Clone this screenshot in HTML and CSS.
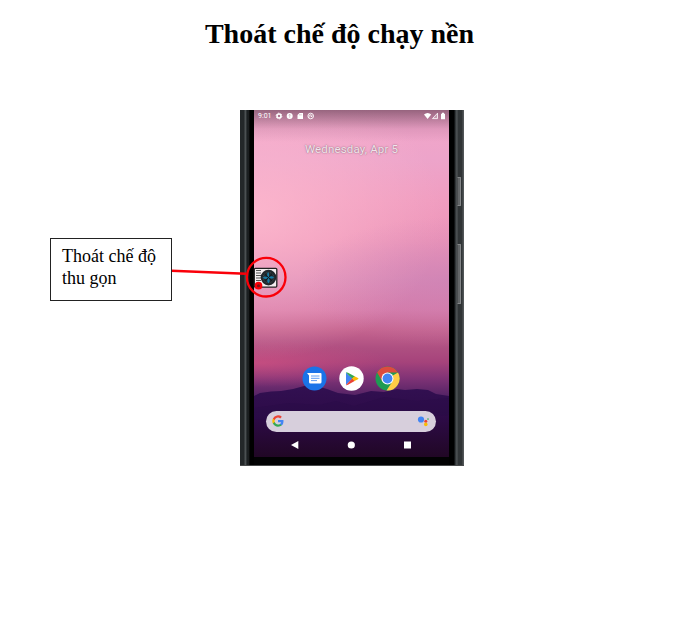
FILE: index.html
```html
<!DOCTYPE html>
<html lang="vi">
<head>
<meta charset="utf-8">
<title>Thoát chế độ chạy nền</title>
<link rel="stylesheet" href="styles.css">
</head>
<body>
<h1 class="title">Thoát chế độ chạy nền</h1>
<main class="figure">
  <div class="phone">
    <div class="frame frame-left"></div>
    <div class="screen">
      <svg class="scenery" viewBox="0 0 195 347" aria-hidden="true">
        <defs>
          <linearGradient id="hill" x1="0" y1="0" x2="0" y2="1"><stop offset="0" stop-color="#321052"/><stop offset=".45" stop-color="#2d0b47"/><stop offset="1" stop-color="#210725"/></linearGradient>
        </defs>
        <path fill="url(#hill)" d="M0 286L6 283L17 281.500L27 281L39 279L52 275.500L63 276L73 279L84 283L101 285L117 281L130 282L143 279L151 280L163 279L174 280L182 284L195 286V347H0Z"/>
        <path fill="#240b42" opacity=".25" d="M0 298L35 293L65 295L82 291L100 296L130 287L163 291L195 288V305L0 310Z"/>
      </svg>
      <div class="status">
        <span class="time">9:01</span>
        <svg width="40" height="8" viewBox="0 0 40 8" aria-hidden="true">
          <circle cx="4" cy="4" r="2" fill="none" stroke="#fff" stroke-width="1.500"/>
          <circle cx="4" cy="4" r="2.900" fill="none" stroke="#fff" stroke-width=".8" stroke-dasharray="1.500 1.537"/>
          <circle cx="14.700" cy="4" r="3" fill="#fff"/><path d="M14.700 2.300V5.800M13.700 3.500L14.700 2.300L15.700 3.500" stroke="#bd91a6" stroke-width=".5" fill="none"/>
          <path d="M24.500 1H28V7H22.500V3Z" fill="#fff"/><path d="M24.700 2.200V3.400M26 2.200V3.400" stroke="#ad8295" stroke-width=".5"/>
          <circle cx="35.700" cy="4" r="2.800" fill="none" stroke="#fff" stroke-width=".9"/><path d="M34 5.800V3.500Q36 1.700 37.300 3.700Q37 5 35.500 4.700M35.500 3.500L37 5" stroke="#fff" stroke-width=".8" fill="none"/>
        </svg>
        <svg class="signals" width="22" height="8" viewBox="0 0 22 8" aria-hidden="true">
          <path fill="#fff" d="M0 2.500Q3.600-.5 7.200 2.500L3.600 7Z"/>
          <path d="M8.500 6.600L13.500 1.200V6.600Z" fill="#fff" fill-opacity=".25" stroke="#fff" stroke-width=".8"/>
          <path fill="#fff" d="M17 1.700H18V.8H20V1.700H21V7.200H17Z"/>
        </svg>
      </div>
      <div class="date">Wednesday, Apr 5</div>
      <div class="dock">
        <svg width="25" height="25" viewBox="0 0 25 25" aria-hidden="true">
          <circle cx="12.500" cy="12.500" r="12" fill="#1a73e8"/>
          <path fill="#fff" d="M5 7H18.500Q19.500 7 19.500 8V16Q19.500 17.500 18 17.500H8.500Q7 17.500 7 16V9.500Z"/>
          <path d="M9 10H17.500M9 12.300H17.500M9 14.600H15" stroke="#5e9cf4" stroke-width="1"/>
        </svg>
        <svg width="25" height="25" viewBox="0 0 25 25" aria-hidden="true">
          <circle cx="12.500" cy="12.500" r="12.200" fill="#fff"/>
          <path fill="#4285f4" d="M7 6.500V19L13.500 12.500Z"/>
          <path fill="#34a853" d="M7 6.500Q7.500 5.800 9 6.700L16 10.500L13.300 12.800Z"/>
          <path fill="#ea4335" d="M7 19L13.300 12.200L16 14.700L9 18.700Q7.500 19.500 7 19Z"/>
          <path fill="#fbbc04" d="M15.500 10.200L19 12Q20 12.600 19 13.200L15.500 15L13 12.600Z"/>
        </svg>
        <svg width="25" height="25" viewBox="0 0 25 25" aria-hidden="true">
          <circle cx="12.500" cy="12.500" r="12" fill="#1e9b53"/>
          <path fill="#ffcd46" d="M12.500 12.500L23 6.600A12 12 0 0 1 11.500 24.450L17.600 15.200Z"/>
          <path fill="#dc4b3e" d="M2.100 6.500A12 12 0 0 1 22.900 6.500H12.500L7.300 15.500Z"/>
          <circle cx="12.500" cy="12.500" r="6" fill="#fff"/>
          <circle cx="12.500" cy="12.500" r="4.900" fill="#4285f4"/>
        </svg>
      </div>
      <div class="search">
        <svg width="12" height="12" viewBox="0 0 24 24" aria-hidden="true">
          <path fill="#4285f4" d="M23 12.250c0-.8-.07-1.500-.2-2.250H12v4.300h6.200a5.300 5.300 0 0 1-2.300 3.500v2.900h3.700C21.700 18.700 23 15.800 23 12.250Z"/>
          <path fill="#34a853" d="M12 23.500c3.100 0 5.700-1 7.600-2.800l-3.700-2.900c-1 .7-2.300 1.100-3.900 1.100-3 0-5.500-2-6.400-4.700H1.800v3C3.700 20.900 7.500 23.500 12 23.500Z"/>
          <path fill="#fbbc05" d="M5.600 14.200a7 7 0 0 1 0-4.400v-3H1.800a11.500 11.500 0 0 0 0 10.400Z"/>
          <path fill="#ea4335" d="M12 5.100c1.700 0 3.200.6 4.400 1.700l3.300-3.300A11.500 11.500 0 0 0 1.800 6.800l3.800 3C6.500 7.100 9 5.100 12 5.100Z"/>
        </svg>
        <svg width="12" height="12" viewBox="0 0 12 12" aria-hidden="true">
          <circle cx="4" cy="4.500" r="3.100" fill="#4285f4"/><circle cx="8.800" cy="6.200" r="1.500" fill="#ea4335"/><circle cx="8.800" cy="9.400" r="1.800" fill="#fbbc05"/><circle cx="11" cy="4.100" r=".8" fill="#34a853"/>
        </svg>
      </div>
      <svg class="nav" width="195" height="10" viewBox="0 0 195 10" fill="#fff" aria-hidden="true">
        <path d="M44.300 1V9L37 5Z"/><circle cx="97.300" cy="5" r="3.600"/><rect x="150" y="1.500" width="7" height="7"/>
      </svg>
    </div>
    <div class="frame frame-right">
      <span class="key power"></span>
      <span class="key volume"></span>
    </div>
  </div>
  <svg class="pointer" width="120" height="46" viewBox="0 0 120 46" aria-hidden="true">
    <rect x="84.300" y="13.300" width="22.500" height="18.800" rx="1" fill="#f4eef0" stroke="#222" stroke-width="1.300"/>
    <path d="M86 15.500H91M86 18H91M86 20.500H91M86 23H91M86 25.500H91" stroke="#555" stroke-width="1.100"/>
    <circle cx="98.500" cy="22.600" r="7.800" fill="#20272b"/>
    <circle cx="98.500" cy="22.600" r="5.300" fill="none" stroke="#51575a" stroke-width=".7" stroke-dasharray="1 1"/>
    <path d="M98 17Q100 19 98.500 22.600Q101 20 104 22Q103 25 98.500 22.600Q101 26 98.500 28.300Q96 27 98.500 22.600Q96 25 93 23Q93 20 98.500 22.600Q96 20 98 17Z" fill="#147aa5"/>
    <path d="M95 19.200L102 26M102 19.200L95 26" stroke="#111b20" stroke-width="1"/>
    <circle cx="88.500" cy="30.700" r="2.700" fill="#80141a" stroke="#fa0009" stroke-width="2.300"/>
    <path d="M1.500 15.700L76 18.800" stroke="#fa0009" stroke-width="2.400"/>
    <circle cx="96.200" cy="22.200" r="19.300" fill="none" stroke="#fa0009" stroke-width="2.300"/>
  </svg>
  <div class="callout">Thoát chế độ<br>thu gọn</div>
</main>
</body>
</html>
```
FILE: styles.css
```css
* { box-sizing: border-box; }
body {
  margin: 0;
  background: #fff;
  color: #000;
  font-family: "Liberation Serif", serif;
}
.title {
  margin: 0;
  padding: 18px 14px 0 0;
  height: 110px;
  font-size: 28px;
  line-height: 32px;
  text-align: center;
}
.figure { position: relative; padding-left: 240px; }
.phone {
  display: grid;
  grid-template-columns: 14px 195px 14.5px;
  width: 223.5px;
  height: 355.5px;
  background: #020203;
  border-bottom: 1px solid #484a4b;
}
.frame-left { background: linear-gradient(90deg, #232729 0 4px, #4b5052 5px 6px, #111517 7px, #25292b 8px, #000 10px); }
.frame-right {
  display: flex;
  flex-direction: column;
  align-items: flex-start;
  padding: 67px 0 0 8px;
  background: linear-gradient(90deg, #000 0 5px, #25292b 6px, #555a5c 8px, #303436 9px 13px, #515557 14px);
}
.key { width: 3.5px; border: 1px solid #858789; border-left-color: #4b4e50; background: #636668; border-radius: 1px; }
.power { height: 29px; }
.volume { height: 60px; margin-top: 38px; }
.screen {
  position: relative;
  display: flex;
  flex-direction: column;
  height: 347px;
  background:
    linear-gradient(180deg, rgba(75,45,65,.55), rgba(120,70,105,.14) 19px, transparent 32px),
    radial-gradient(ellipse 150px 65px at 195px 172px, rgba(198,128,182,.5), transparent),
    radial-gradient(ellipse 190px 145px at 0 105px, rgba(255,190,209,.75), transparent),
    radial-gradient(ellipse 130px 24px at 5px 253px, rgba(216,84,132,.6), transparent),
    linear-gradient(180deg, #f3a6c9 0, #eda4ca 50px, #f09dc0 90px, #ed95b9 130px, #dc8ab5 170px, #d77ba8 200px, #c5648f 220px, #ae4f81 238px, #a6437b 252px, #813376 268px, #562466 285px, #39164f 295px);
  color: #fff;
  font-family: Roboto, sans-serif;
}
.scenery { position: absolute; inset: 0; width: 195px; height: 347px; }
.status, .date, .dock, .search, .nav { position: relative; }
.status { display: flex; align-items: center; height: 12px; padding: 0 3px 0 4px; }
.time { width: 17px; font-size: 7px; line-height: 12px; }
.signals { margin-left: auto; }
.date {
  height: 20px;
  margin-top: 17px;
  color: #f2e5eb;
  font-size: 11.5px;
  line-height: 20px;
  letter-spacing: .15px;
  text-align: center;
  text-shadow: 0 0 1.5px rgba(55,35,50,.7);
}
.dock { display: flex; justify-content: center; gap: 11.3px; height: 25px; margin: 207px .8px 0 0; }
.search {
  display: flex;
  align-items: center;
  justify-content: space-between;
  width: 170px;
  height: 21px;
  margin: 20px 0 0 12px;
  padding: 0 7.5px 1px 6px;
  border-radius: 11px;
  background: #d7cfdc;
}
.nav { margin-top: 8px; }
.callout {
  position: absolute;
  left: 50px;
  top: 128px;
  width: 122px;
  height: 63px;
  padding: 6px 11px;
  border: 1px solid #222;
  background: #fff;
  font-size: 18px;
  line-height: 22px;
  white-space: nowrap;
}
.pointer { position: absolute; left: 170px; top: 145px; }
```
